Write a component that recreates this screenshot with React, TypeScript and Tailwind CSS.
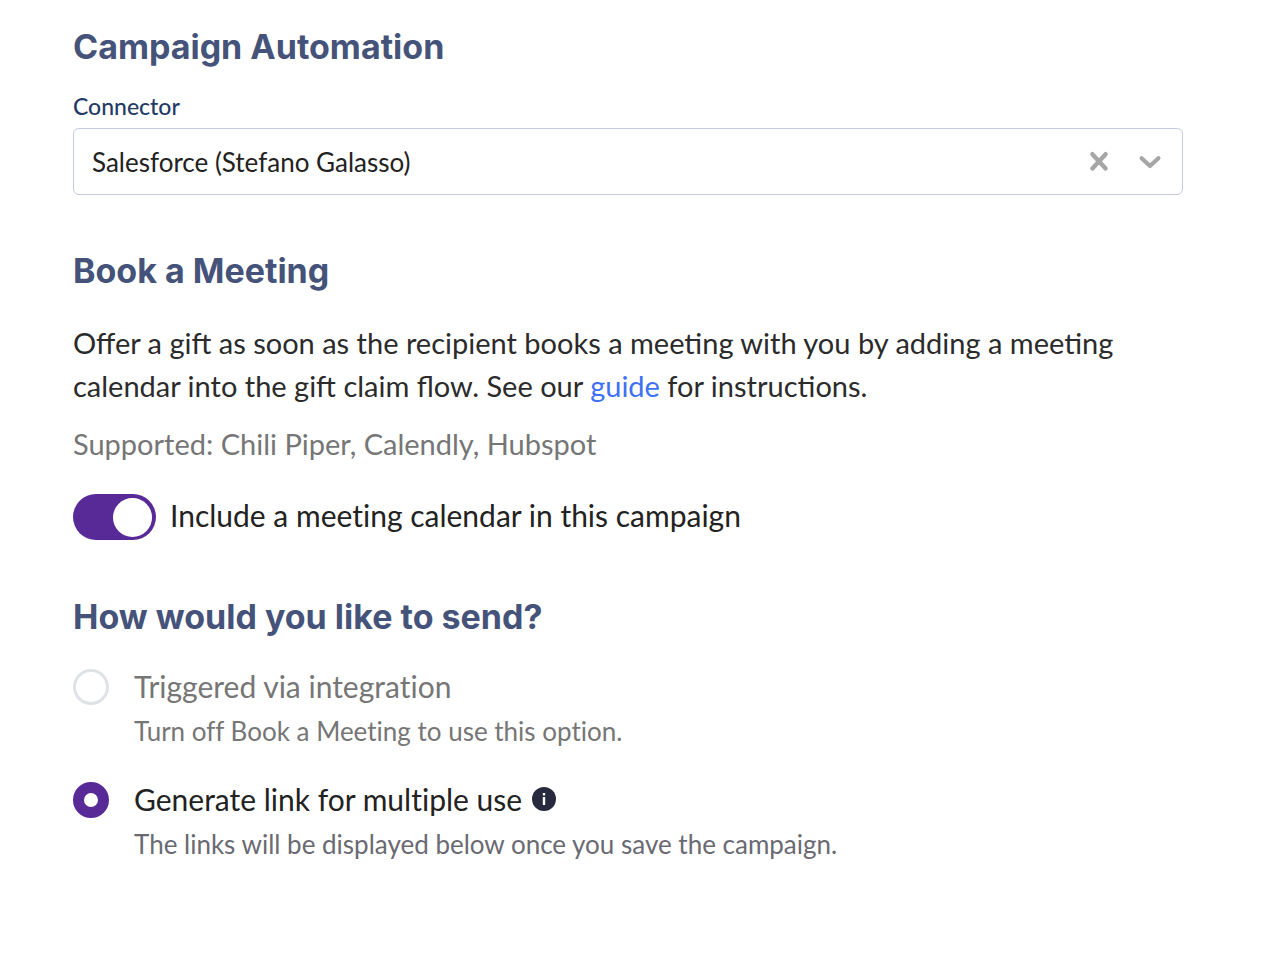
import { useState } from "react";
import type { ReactNode } from "react";

function SectionTitle({ children }: { children: ReactNode }) {
  return (
    <h2 className="font-['Inter',sans-serif] text-[34px] leading-[42px] font-bold text-[#45537a]">
      {children}
    </h2>
  );
}

function InfoIcon() {
  return (
    <svg viewBox="0 0 24 24" className="size-6" aria-hidden="true">
      <circle cx="12" cy="12" r="12" fill="#27293f" />
      <rect x="10.8" y="6" width="2.4" height="2.4" fill="#fff" />
      <rect x="10.8" y="10" width="2.4" height="8" fill="#fff" />
    </svg>
  );
}

type SendOptionProps = {
  id: string;
  label: string;
  hint: string;
  checked: boolean;
  disabled?: boolean;
  info?: boolean;
  onSelect: () => void;
};

function SendOption({ id, label, hint, checked, disabled, info, onSelect }: SendOptionProps) {
  return (
    <div className="flex items-start gap-[25px] [font-variant-ligatures:none]">
      <input
        type="radio"
        id={id}
        name="send"
        checked={checked}
        disabled={disabled}
        onChange={onSelect}
        aria-describedby={`${id}-hint`}
        className="size-9 shrink-0 appearance-none rounded-full border-3 border-[#dfe2e6] bg-white checked:border-11 checked:border-[#582a98]"
      />
      <div>
        <div className="flex items-center gap-2.5">
          <label
            htmlFor={id}
            className={`text-[30px] leading-[34px] ${disabled ? "text-[#767676]" : "text-[#222222]"}`}
          >
            {label}
          </label>
          {info && (
            <button type="button" aria-label="More information">
              <InfoIcon />
            </button>
          )}
        </div>
        <p
          id={`${id}-hint`}
          className={`mt-2.5 text-[26px] leading-9 ${disabled ? "text-[#767676]" : "text-[#6a6a73]"}`}
        >
          {hint}
        </p>
      </div>
    </div>
  );
}

export default function App() {
  const [connector, setConnector] = useState("salesforce");
  const [includeCalendar, setIncludeCalendar] = useState(true);
  const [sendMode, setSendMode] = useState("link");

  return (
    <main className="bg-white pt-[26px] pr-[83px] pb-24 pl-[73px] font-['Lato',sans-serif] text-[#2b2b2b]">
      <section>
        <SectionTitle>Campaign Automation</SectionTitle>
        <label
          htmlFor="connector"
          className="mt-6 block text-[23px] leading-7 font-medium text-[#233a66]"
        >
          Connector
        </label>
        <div className="relative mt-2">
          <select
            id="connector"
            value={connector}
            onChange={(e) => setConnector(e.target.value)}
            className="block h-[67px] w-full appearance-none rounded-md border border-[#c5cae0] bg-white pt-0.5 pr-28 pl-[18px] text-[26px] text-[#222222] [font-variant-ligatures:none]"
          >
            <option value=""></option>
            <option value="salesforce">Salesforce (Stefano Galasso)</option>
          </select>
          <div className="pointer-events-none absolute inset-y-0 right-[21px] flex items-center gap-[27px]">
            <button
              type="button"
              aria-label="Clear connector"
              onClick={() => setConnector("")}
              className="pointer-events-auto"
            >
              <svg viewBox="0 0 24 24" className="size-6" fill="none" aria-hidden="true">
                <path
                  d="M5.4 4.2 18.6 18.4M18.6 4.2 5.4 18.4"
                  stroke="#a6a6a6"
                  strokeWidth="4.4"
                  strokeLinecap="round"
                />
              </svg>
            </button>
            <svg viewBox="0 0 24 24" className="size-6" fill="none" aria-hidden="true">
              <path
                d="M3.6 8.2 12 16 20.4 8.2"
                stroke="#a6a6a6"
                strokeWidth="4.2"
                strokeLinecap="round"
                strokeLinejoin="round"
              />
            </svg>
          </div>
        </div>
      </section>

      <section className="mt-[55px]">
        <SectionTitle>Book a Meeting</SectionTitle>
        <p className="mt-[29px] text-[29px] leading-[43px]">
          Offer a gift as soon as the recipient books a meeting with you by adding a meeting
          calendar into the gift claim flow. See our{" "}
          <a href="#guide" className="text-[#4070f4]">
            guide
          </a>{" "}
          for instructions.
        </p>
        <p className="mt-[15px] text-[29px] leading-[43px] text-[#767676]">
          Supported: Chili Piper, Calendly, Hubspot
        </p>
        <div className="mt-[29px] flex items-start gap-3.5">
          <input
            type="checkbox"
            role="switch"
            id="include-calendar"
            checked={includeCalendar}
            onChange={(e) => setIncludeCalendar(e.target.checked)}
            className="flex h-[46px] w-[83px] shrink-0 appearance-none items-center rounded-full bg-[#c9ccd3] px-1 before:size-[39px] before:rounded-full before:bg-white before:content-[''] checked:justify-end checked:bg-[#582a98]"
          />
          <label
            htmlFor="include-calendar"
            className="text-[30px] leading-[43px] text-[#222222] [font-variant-ligatures:none]"
          >
            Include a meeting calendar in this campaign
          </label>
        </div>
      </section>

      <section className="mt-14">
        <SectionTitle>How would you like to send?</SectionTitle>
        <div className="mt-[31px] flex flex-col gap-[33px]">
          <SendOption
            id="send-integration"
            label="Triggered via integration"
            hint="Turn off Book a Meeting to use this option."
            checked={sendMode === "integration"}
            disabled={includeCalendar}
            onSelect={() => setSendMode("integration")}
          />
          <SendOption
            id="send-link"
            label="Generate link for multiple use"
            hint="The links will be displayed below once you save the campaign."
            checked={sendMode === "link"}
            info
            onSelect={() => setSendMode("link")}
          />
        </div>
      </section>
    </main>
  );
}
